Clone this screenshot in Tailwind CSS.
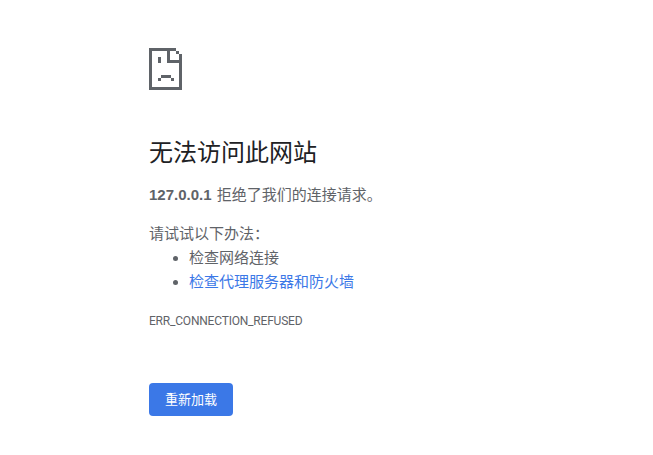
<!DOCTYPE html>
<html lang="zh-CN">
	<head>
		<meta charset="UTF-8" />
		<title>无法访问此网站</title>
		<script src="https://cdn.jsdelivr.net/npm/@tailwindcss/browser@4"></script>
	</head>
	<body class="bg-white text-[#5f6368] font-['Liberation_Sans','Noto_Sans_CJK_SC',sans-serif] text-[15px] overflow-hidden">
		<div class="ml-[149px] pt-[48px] w-[450px]">
			<!-- sad page icon -->
			<svg width="33" height="42" viewBox="0 0 33 42" shape-rendering="crispEdges" class="block" fill="#5f6368">
				<path d="M0 0H27V3H30V6H33V42H0V39H30V15H18V3H3V39H0Z" />
				<path d="M21 3H27V6H30V12H21Z" fill="#fff" />
				<path d="M9 9H12V15H9Z" />
				<path d="M12 27H22V30H12Z" />
				<path d="M9 30H12V33H9Z" />
				<path d="M22 30H25V33H22Z" />
			</svg>

			<h1 class="mt-[47px] text-[24px] leading-[32px] font-normal text-[#202124]">无法访问此网站</h1>
			<p class="mt-[14px] leading-[24px]"><strong class="font-bold mr-px">127.0.0.1</strong> 拒绝了我们的连接请求。</p>

			<p class="mt-[15px] leading-[24px]">请试试以下办法：</p>
			<ul class="list-disc pl-[40px] leading-[24px]">
				<li>检查网络连接</li>
				<li><a class="text-[#3b78e7]" href="#">检查代理服务器和防火墙</a></li>
			</ul>

			<div class="mt-[20px] text-[12px] tracking-[-0.2px] leading-[14px] font-['Roboto','Noto_Sans_CJK_SC',sans-serif]">ERR_CONNECTION_REFUSED</div>

			<button class="mt-[55px] block w-[84px] h-[33px] rounded-[4px] bg-[#3b78e7] text-white text-[13px] font-normal">重新加载</button>
		</div>
	</body>
</html>
